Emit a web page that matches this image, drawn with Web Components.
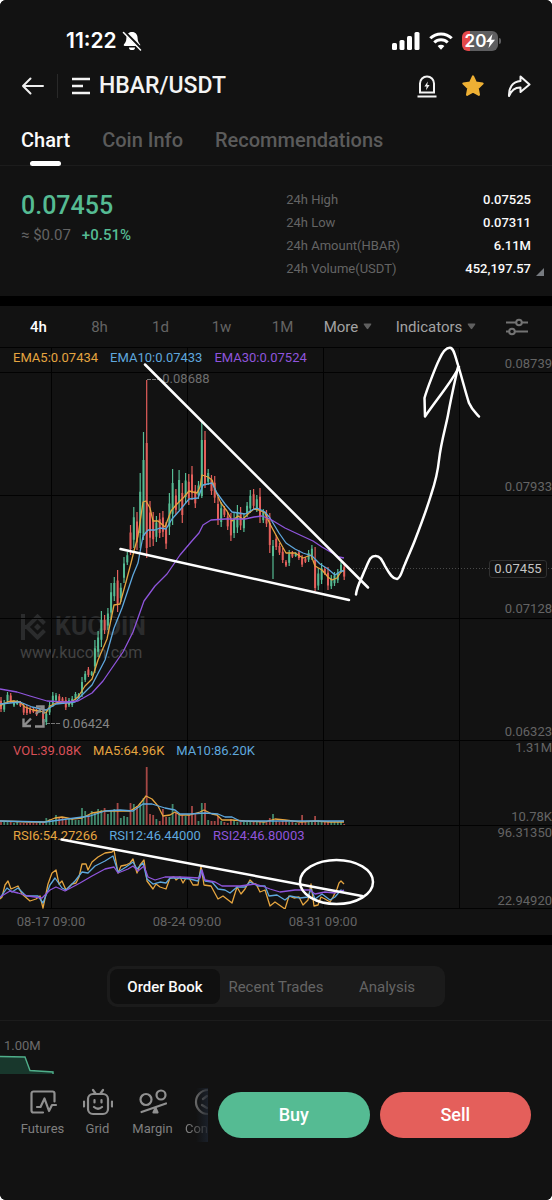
<!DOCTYPE html>
<html lang="en">
<head>
<meta charset="utf-8">
<meta name="viewport" content="width=device-width,initial-scale=1">
<title>HBAR/USDT</title>
<style>
body{ margin:0; background:#fff; }
</style>
</head>
<body>
<trade-page>
    <status-bar time="11:22" battery="20"></status-bar>
    <pair-header>HBAR/USDT</pair-header>
    <page-tabs></page-tabs>
    <price-stats></price-stats>
    <interval-bar slot="chart"></interval-bar>
    <candle-chart slot="chart">
        <hand-drawing></hand-drawing>
    </candle-chart>
    <segment-tabs slot="book"></segment-tabs>
    <depth-preview slot="book">1.00M</depth-preview>
    <trade-bar slot="book"></trade-bar>
</trade-page>

<script>
const RESET = `
    :host,*{ box-sizing:border-box; }
    button{ margin:0; padding:0; border:0; background:none; color:inherit; font:inherit; cursor:pointer; }
    a{ color:inherit; text-decoration:none; }
    svg{ display:block; }
`;

class BaseElement extends HTMLElement {
    constructor() {
        super();
        const shadowRoot = this.attachShadow({ mode: 'open' });
        shadowRoot.innerHTML = `<style>${RESET}${this.css()}</style>${this.html()}`;
    }
    css() { return '' }
    html() { return '' }
}

class TradePage extends BaseElement {
    css() {
        return `
        :host{
            --bg:#121212; --line:#1c1c1c; --muted:#646464; --soft:#8c8c8c;
            --green:#55bb93; --red:#e45f5b; --yellow:#e5a540; --blue:#5fa8de; --purple:#8f55dc;
            display:flex; flex-direction:column; min-height:100vh;
            background:#000; color:#f3f3f3; border-radius:6px; overflow:hidden;
            font:13px/16px Roboto,"Liberation Sans",sans-serif;
        }
        section,header,main{ background:var(--bg); }
        main{ margin:10px 0; }
        section{ flex:1; }
        `;
    }
    html() {
        return `
        <header><slot></slot></header>
        <main><slot name="chart"></slot></main>
        <section><slot name="book"></slot></section>
        `;
    }
}

class StatusBar extends BaseElement {
    css() {
        return `
        :host{ display:flex; align-items:center; justify-content:space-between; padding:28px 54px 0 66px; height:54px; font:600 21px/26px Inter,sans-serif; color:#fff; }
        div{ display:flex; align-items:center; }
        .left{ gap:5px; }
        .right{ gap:9px; }
        .battery{ position:relative; display:flex; align-items:center; justify-content:center; width:36px; height:20px; border-radius:6px; background:linear-gradient(to right,#e5484a 22%,#5e5e60 0%); font-size:17px; }
        .battery::after{ content:""; position:absolute; left:37px; top:7px; width:2px; height:6px; border-radius:0 2px 2px 0; background:#5e5e60; }
        `;
    }
    html() {
        return `
        <div class="left"><span>${this.getAttribute('time')}</span>
            <svg width="20" height="20" viewBox="0 0 20 20" aria-label="Silent"><path d="M10 1c-3.600 0-5.600 2.700-5.600 6 0 3.500-1.400 5-2.400 6.300-.6.900-.1 1.700.8 1.700h14.400c.9 0 1.400-.8.800-1.700-1-1.300-2.400-2.800-2.400-6.300 0-3.300-2-6-5.600-6z" fill="#fff"/><path d="M7 16.500h6a3 2.600 0 0 1-6 0z" fill="#fff"/><path d="M2.500 1L19.500 18" stroke="#121212" stroke-width="3"/><path d="M1.500 1.500L18.500 19" stroke="#fff" stroke-width="1.500" stroke-linecap="round"/></svg>
        </div>
        <div class="right">
            <svg width="28" height="18" viewBox="0 0 28 18" fill="#fff" aria-label="Signal"><rect y="11" width="5" height="7" rx="1.500"/><rect x="7.500" y="8" width="5" height="10" rx="1.500"/><rect x="15" y="4" width="5" height="14" rx="1.500"/><rect x="22.500" width="5" height="18" rx="1.500"/></svg>
            <svg width="24" height="18" viewBox="0 0 24 18" fill="none" stroke="#fff" stroke-width="3" aria-label="Wi-Fi"><path d="M1.300 6.300a15.200 15.200 0 0 1 21.400 0"/><path d="M5.300 10.500a9.500 9.500 0 0 1 13.400 0"/><path d="M12 17.700l-3.400-3.600a4.900 4.900 0 0 1 6.800 0z" fill="#fff" stroke="none"/></svg>
            <div class="battery">${this.getAttribute('battery')}<svg width="9" height="14" viewBox="0 0 9 14"><path d="M6.500 0L0 8h3.800L2.500 14 9 5.700H5.200z" fill="#fff"/></svg></div>
        </div>
        `;
    }
}

class PairHeader extends BaseElement {
    css() {
        return `
        :host{ display:flex; align-items:center; height:64px; padding:0 21px; }
        .back{ padding-right:13px; border-right:1px solid #292929; }
        .pair{ display:flex; align-items:center; gap:8px; margin-left:14px; }
        h1{ margin:0; font-size:23px; line-height:28px; font-weight:500; }
        .tools{ display:flex; gap:22px; margin-left:auto; }
        `;
    }
    html() {
        return `
        <button class="back" aria-label="Back"><svg width="23" height="24" viewBox="0 0 23 24" fill="none" stroke="#eee" stroke-width="2" stroke-linecap="round" stroke-linejoin="round"><path d="M22 12H2M9.500 4.500L2 12l7.500 7.500"/></svg></button>
        <button class="pair">
            <svg width="19" height="18" viewBox="0 0 19 18" stroke="#f3f3f3" stroke-width="2.400"><path d="M0 2h18M0 9h11M0 16h18"/></svg>
            <h1><slot></slot></h1>
        </button>
        <div class="tools">
            <button aria-label="Price alert"><svg width="24" height="24" viewBox="0 0 24 24" fill="none" stroke="#f3f3f3" stroke-width="2"><path d="M5 18.500V9.500a7 7 0 0 1 14 0v9zM2.500 22.500h19"/><path d="M12.800 7.500l-3.400 5h2.200l-.6 3.800 3.600-5.200h-2.300z" fill="#f3f3f3" stroke="none"/></svg></button>
            <button aria-label="Favourite"><svg width="24" height="24" viewBox="0 0 24 24"><path d="M12 2.500l2.900 6.100 6.700.9-4.900 4.600 1.200 6.700-5.900-3.200-5.900 3.200 1.200-6.700-4.900-4.600 6.700-.9z" fill="#eeb034" stroke="#eeb034" stroke-width="2.200" stroke-linejoin="round"/></svg></button>
            <button aria-label="Share"><svg width="24" height="24" viewBox="0 0 24 24" fill="none" stroke="#f3f3f3" stroke-width="2" stroke-linejoin="round"><path d="M13.500 2.500L22.500 10.500 13.500 18v-4.600C8 13.200 4.500 16 2 22c-.4-8 3.500-14.500 11.500-15z"/></svg></button>
        </div>
        `;
    }
}

class PageTabs extends BaseElement {
    css() {
        return `
        :host{ display:block; border-bottom:1px solid var(--line); }
        nav{ display:flex; gap:32px; padding:0 21px; }
        a{ position:relative; padding:10px 0 13px; font-size:20px; line-height:24px; font-weight:500; color:#5b5b5b; }
        a[aria-current]{ color:#fafafa; }
        a[aria-current]::after{ content:""; position:absolute; left:50%; bottom:-1px; width:31px; height:5px; margin-left:-16px; border-radius:3px; background:#fff; }
        `;
    }
    html() {
        return `<nav><a href="#chart" aria-current="page">Chart</a><a href="#info">Coin Info</a><a href="#recommendations">Recommendations</a></nav>`;
    }
}

class PriceStats extends BaseElement {
    css() {
        return `
        :host{ position:relative; display:grid; grid-template-columns:13fr 12fr; padding:22px 21px 16px; }
        .price{ color:var(--green); font-size:25px; line-height:36px; font-weight:500; }
        .sub{ display:flex; gap:11px; font-size:15px; line-height:22px; color:var(--muted); }
        .sub b{ color:var(--green); font-weight:500; }
        dl{ margin:0; line-height:23px; }
        dl div{ display:flex; justify-content:space-between; }
        dt{ color:var(--muted); }
        dd{ margin:0; color:#fafafa; font-weight:500; }
        .more{ position:absolute; right:8px; bottom:20px; }
        `;
    }
    html() {
        return `
        <div><div class="price">0.07455</div><div class="sub"><span>≈ $0.07</span><b>+0.51%</b></div></div>
        <dl>
            <div><dt>24h High</dt><dd>0.07525</dd></div>
            <div><dt>24h Low</dt><dd>0.07311</dd></div>
            <div><dt>24h Amount(HBAR)</dt><dd>6.11M</dd></div>
            <div><dt>24h Volume(USDT)</dt><dd>452,197.57</dd></div>
        </dl>
        <svg class="more" width="8" height="8" viewBox="0 0 8 8"><path d="M8 0v8H0z" fill="#777b80"/></svg>
        `;
    }
}

class IntervalBar extends BaseElement {
    css() {
        return `
        :host{ display:grid; grid-template-columns:repeat(5,61fr) 70fr 106fr 55fr; height:41px; padding:0 8px; font-size:15px; color:var(--muted); }
        button{ display:flex; align-items:center; justify-content:center; gap:5px; }
        .on{ color:#fff; font-weight:500; }
        .menu{ color:#a3a3a3; }
        `;
    }
    html() {
        const caret = '<svg width="9" height="7" viewBox="0 0 9 7"><path d="M1.500.500h6q1.500 0 .6 1.200L5.200 5.800q-.7.800-1.400 0L.9 1.700Q0 .500 1.500.500z" fill="#5f5f5f"/></svg>';
        return `
        <button class="on">4h</button><button>8h</button><button>1d</button><button>1w</button><button>1M</button>
        <button class="menu" aria-haspopup="menu">More ${caret}</button>
        <button class="menu" aria-haspopup="menu">Indicators ${caret}</button>
        <button aria-label="Chart settings"><svg width="22" height="18" viewBox="0 0 22 18" fill="none" stroke="#737373" stroke-width="2"><path d="M0 4.500h10M16 4.500h6M0 13.500h3M9 13.500h13"/><circle cx="13" cy="4.500" r="2.800"/><circle cx="6" cy="13.500" r="2.800"/></svg></button>
        `;
    }
}

// [high, low, up, body top, body bottom] in plot units; the body is optional
const CANDLES = [
    [697,712,0],[700,712,1],[692,703,1],[693,703,0],[700,707,1],[700,705,1],[701,707,0],[703,715,0],[705,715,0],[707,714,0],
    [708,713,0],[709,716,0],[708,713,1],[706,727,0],[710,725,1],[702,715,1],[692,707,1],[693,702,1],[694,703,0],[697,703,0],
    [697,710,0],[698,707,1],[696,707,1],[692,700,1],[693,699,1],[677,697,1],[671,682,1],[667,677,0],[671,676,1],[640,673,1],
    [631,657,1],[611,647,1],[615,634,0],[608,630,1],[583,620,1],[577,601,1],[570,612,0],[583,602,1],[557,583,1],[552,565,1],
    [525,555,0],[507,548,1],[512,550,0],[473,548,1],[432,540,1,460,536],[380,558,0,443,548],[501,547,0],[512,546,0],[516,542,1],[513,538,0],
    [511,537,0],[522,549,0],[493,535,1],[469,525,1],[489,515,0],[470,510,1],[483,523,0],[473,503,1],[474,505,0],[466,500,0],
    [485,508,0],[481,499,1],[422,498,1,440,496],[431,488,0,440,484],[469,485,1],[475,495,0],[476,503,0],[497,525,0],[502,527,1],[506,517,0],
    [512,530,0],[513,541,0],[513,538,1],[505,533,1],[507,530,0],[513,532,1],[502,517,1],[490,513,1],[489,510,0],[495,512,1],
    [488,523,0],[509,523,1],[510,527,0],[513,553,0],[540,579,1,546,556],[535,550,0],[543,555,0],[548,563,0],[560,567,0],[550,566,1],
    [551,558,0],[552,557,1],[550,560,0],[555,567,0],[557,563,0],[550,562,1],[545,560,1],[547,591,0,560,588],[568,590,1],[563,584,1],
    [567,575,0],[567,590,0],[575,589,1],[572,586,1],[569,583,1],[562,573,1],[563,580,0]
];

const VOLUMES = [
    3,3,4,3,2,3,2,2,2,2,2,2,3,3,7,6,5,10,8,7,5,6,7,5,5,17,14,10,14,12,16,15,17,11,15,16,22,7,9,8,
    22,21,19,22,27,58,11,10,6,4,16,8,8,21,12,11,10,9,10,19,12,4,22,22,5,4,4,9,4,3,2,6,5,3,3,3,3,4,3,3,
    4,3,3,7,11,4,3,4,5,3,3,2,2,10,3,3,4,9,5,3,4,4,3,3,3,3,1
];

const LINES = [
    ['yellow','0,706 7,702 13,701 20,702 25,707 33,710 40,711 46,713 50,706 56,703 63,702 70,703 78,697 85,686 92,679 98,660 107,639 114,605 120,604 126,582 131,563 134,551 138,536 143,502 146,501 150,508 153,521 158,521 165,527 171,511 176,505 180,501 184,497 189,491 197,493 200,487 202,475 208,477 212,480 216,492 221,503 227,511 232,521 238,516 243,519 249,513 254,509 259,510 265,513 270,524 277,537 286,553 295,553 303,558 311,555 315,566 322,570 328,577 332,580 337,578 341,572 344,570'],
    ['blue','0,704 20,702 32,707 46,710 56,704 75,702 92,685 105,660 114,628 122,608 133,575 138,563 143,536 148,530 155,530 160,528 166,529 172,519 180,510 189,499 198,498 203,485 212,483 217,493 225,504 232,512 245,514 252,510 257,508 265,512 270,518 279,533 286,543 295,549 303,553 312,556 320,564 328,569 335,575 341,571 344,571'],
    ['purple','0,689 17,692 30,696 47,701 65,702 78,701 92,693 103,681 114,665 123,652 133,632 144,601 155,586 167,574 180,555 191,542 199,533 203,525 211,520 225,519 245,519 254,517 262,516 270,519 285,528 300,535 313,541 322,547 334,554 339,557 344,558'],
    ['yellow','0,821 30,822 45,822 55,818 62,817 72,819 82,818 92,813 105,811 120,811 130,811 138,806 143,800 146,796 152,799 158,806 163,816 170,815 175,812 180,815 190,815 200,812 204,810 212,814 217,815 222,820 232,820 245,821 265,822 275,819 285,820 300,822 315,821 330,822 344,822'],
    ['blue','0,821 45,822 60,820 75,818 90,816 105,811 120,810 133,811 143,804 152,804 165,808 175,810 180,814 190,814 205,813 218,814 225,817 232,817 240,821 344,821'],
    ['yellow','0,899 2,897 5,885 8,881 11,889 18,886 22,894 30,901 36,899 40,896 43,908 48,884 52,873 56,870 59,884 62,881 66,890 72,884 76,883 79,877 82,864 86,864 88,870 92,862 98,857 105,853 112,852 114,850 118,873 121,866 126,865 130,863 133,859 137,873 140,865 144,860 147,881 150,885 153,889 156,884 160,887 166,889 170,878 174,877 176,880 180,877 183,883 186,878 189,878 193,885 198,885 201,866 204,885 211,886 218,899 223,896 232,903 237,887 241,894 245,889 250,880 254,884 256,884 260,892 265,890 270,906 275,902 285,909 289,896 294,898 299,897 303,905 308,900 311,884 314,906 318,905 321,897 325,899 330,902 333,897 337,889 339,883 341,881 344,884'],
    ['blue','0,898 7,888 12,892 18,888 26,896 38,896 43,903 50,885 55,878 62,888 66,890 75,881 82,872 88,873 95,866 105,861 113,856 118,872 126,867 133,862 137,869 143,863 147,879 153,884 160,882 166,883 170,878 180,878 190,879 198,881 201,870 205,881 212,882 218,889 225,890 230,893 237,887 245,887 250,882 258,886 265,886 269,896 277,895 285,900 290,896 300,898 308,897 311,889 315,899 322,894 330,900 335,897 341,890 344,891'],
    ['purple','0,897 10,891 18,893 28,896 42,898 50,890 56,887 65,891 80,883 92,876 105,869 114,867 118,873 128,869 133,866 138,871 144,866 148,877 155,880 165,877 180,877 200,878 202,870 205,880 215,882 222,886 240,886 255,884 262,886 270,889 280,892 295,890 310,890 315,894 325,892 335,893 344,890']
];

class CandleChart extends BaseElement {
    css() {
        return `
        :host{ display:block; color:var(--muted); }
        .plot{ position:relative; display:grid; grid-template-rows:393px 85px 84px; }
        .graph,::slotted(hand-drawing){ position:absolute; inset:0; width:100%; height:100%; pointer-events:none; }
        .graph polyline{ fill:none; stroke-width:1.300; stroke-linejoin:round; }
        .pane{ position:relative; display:flex; justify-content:space-between; }
        .legend{ display:flex; gap:12px; padding:2px 0 0 13px; line-height:18px; }
        .axis{ display:flex; flex-direction:column; justify-content:space-between; text-align:right; }
        .price .axis{ display:grid; grid-template-rows:25px repeat(3,1fr); align-items:end; }
        .yellow{ color:var(--yellow); } .blue{ color:var(--blue); } .purple{ color:var(--purple); } .red{ color:#d85058; }
        .mark{ position:absolute; left:29.4%; top:24px; color:#6e6e6e; }
        .mark.low{ left:11.3%; top:369px; color:#858585; }
        .now{ position:absolute; right:5px; top:213px; width:58px; border:1px solid #303030; border-radius:3px; background:var(--bg); color:#c4c4c4; text-align:center; }
        .watermark{ position:absolute; left:20px; top:266px; color:#2b2c2d; }
        .brand{ display:flex; align-items:center; gap:7px; font-size:25px; line-height:28px; font-weight:700; }
        .watermark small{ display:block; font-size:16px; line-height:24px; color:#424242; }
        .expand{ position:absolute; left:22px; top:358px; }
        .dates{ display:grid; grid-template-columns:repeat(3,136fr) 161fr; margin-left:-17px; line-height:26px; text-align:center; }
        `;
    }
    html() {
        const step = 136 / 42;
        const bars = CANDLES.map(([high,low,up,top,bottom],i) => {
            const x = (1 + step * i).toFixed(1);
            const size = low - high;
            const t = top || high + size * .25;
            const b = bottom || low - size * .2;
            const color = `var(--${up ? 'green' : 'red'})`;
            return `<g stroke="${color}"><path d="M${x} ${high}V${low}" stroke-width="1.200"/><path d="M${x} ${t}V${b}" stroke-width="2"/><path d="M${x} ${825 - VOLUMES[i]}V825" stroke-width="1.800" opacity=".7"/></g>`;
        }).join('');
        const lines = LINES.map(([color,points]) => `<polyline points="${points}" stroke="var(--${color})"/>`).join('');
        return `
        <div class="plot">
            <div class="watermark">
                <div class="brand"><svg width="28" height="28" viewBox="0 0 28 28" fill="none" stroke="currentColor" stroke-width="4"><path d="M3 1v26M4 14h3L17.500 3.500l7 7M7 14l10.500 10.500 7-7"/><path d="M17.500 10.500L21 14l-3.500 3.500L14 14z" fill="currentColor" stroke="none"/></svg>KUCOIN</div>
                <small>www.kucoin.com</small>
            </div>
            <svg class="graph" viewBox="0 347 552 562" preserveAspectRatio="none">
                <path d="M0 347.500H552M0 372.500H552M0 495.500H552M0 618.500H552M0 740.500H552M0 825.500H552M0 908.500H552M51.500 347V909M187.500 347V909M323.500 347V909M459.500 347V909" stroke="#020202"/>
                <path d="M344 568.500H552" stroke="#4a4a4a" stroke-dasharray="1 2"/>
                <path d="M147 379.500H162M46 723.500H60" stroke="#777" stroke-dasharray="4 1"/>
                ${bars}${lines}
            </svg>
            <div class="pane price">
                <div class="legend"><span class="yellow">EMA5:0.07434</span><span class="blue">EMA10:0.07433</span><span class="purple">EMA30:0.07524</span></div>
                <div class="axis"><span>0.08739</span><span>0.07933</span><span>0.07128</span><span>0.06323</span></div>
                <span class="mark">0.08688</span>
                <span class="mark low">0.06424</span>
                <span class="now">0.07455</span>
                <button class="expand" aria-label="Full screen"><svg width="23" height="23" viewBox="0 0 23 23" fill="none" stroke="#8d8d8d" stroke-width="2.400"><path d="M14 1.500h7.500V9M21 2l-7 7M13 21.500h8.500V14M1.500 13.500v7.500H9M2 20.500l7-7"/></svg></button>
            </div>
            <div class="pane">
                <div class="legend"><span class="red">VOL:39.08K</span><span class="yellow">MA5:64.96K</span><span class="blue">MA10:86.20K</span></div>
                <div class="axis"><span>1.31M</span><span>10.78K</span></div>
            </div>
            <div class="pane">
                <div class="legend"><span class="yellow">RSI6:54.27266</span><span class="blue">RSI12:46.44000</span><span class="purple">RSI24:46.80003</span></div>
                <div class="axis"><span>96.31350</span><span>22.94920</span></div>
            </div>
            <slot></slot>
        </div>
        <div class="dates"><span>08-17 09:00</span><span>08-24 09:00</span><span>08-31 09:00</span></div>
        `;
    }
}

class HandDrawing extends BaseElement {
    css() {
        return `
        :host{ display:block; }
        svg{ width:100%; height:100%; overflow:visible; fill:none; stroke:#fff; stroke-width:2.500; stroke-linecap:round; stroke-linejoin:round; }
        `;
    }
    html() {
        return `
        <svg viewBox="0 347 552 562" preserveAspectRatio="none">
            <path d="M145 364.500L368 587.500M120.500 549L349 600M61.500 839.500L362 896"/>
            <path d="M356 594.500C357 586 361 580 364 572C369 561 370 556 375 556C380 555.500 382 560 385 566C390 575 393 579 397 579C401 578 402 570 405 564C409 554 412 548 415 540C422 522 427 508 431 495C435 483 438 470 439 460C441 442 446 426 448 415C451 398 454 385 458 367"/>
            <path d="M459 367C453 380 437 399 425 416.500L424.500 398C427 389 436 366 439 360C442 353 446 347.500 450 347.700C454 348 455 356 458 365C462 378 466 394 469 403C472 410 476 413 479 416.500"/>
            <ellipse cx="336.500" cy="882" rx="36.500" ry="22"/>
        </svg>
        `;
    }
}

class SegmentTabs extends BaseElement {
    css() {
        return `
        :host{ display:flex; justify-content:center; padding:21px 0 13px; border-bottom:1px solid var(--line); }
        div{ display:flex; gap:1px; padding:3px; border-radius:10px; background:#1b1b1b; }
        button{ width:110px; height:35px; border-radius:8px; color:var(--muted); font-size:15px; }
        .on{ background:#101010; color:#fafafa; font-weight:500; }
        `;
    }
    html() {
        return `<div><button class="on">Order Book</button><button>Recent Trades</button><button>Analysis</button></div>`;
    }
}

class DepthPreview extends BaseElement {
    css() {
        return `
        :host{ display:block; padding-top:17px; color:#6b6b6b; }
        span{ padding-left:4px; }
        `;
    }
    html() {
        return `
        <span><slot></slot></span>
        <svg width="54" height="20" viewBox="0 0 54 20"><path d="M0 2.500L25 3l5 13.500L53 18l1 2H0z" fill="#18372c"/><path d="M0 2.500L25 3l5 13.500L53 18v2" fill="none" stroke="#4fae8a" stroke-width="1.400"/></svg>
        `;
    }
}

class TradeBar extends BaseElement {
    css() {
        return `
        :host{ display:flex; align-items:center; gap:10px; height:82px; padding-right:21px; }
        nav{ display:flex; flex:0 0 208px; height:54px; padding-left:15px; overflow:hidden; color:#7f7f7f; background:linear-gradient(to left,#1a2029,transparent 12px); }
        a{ display:flex; flex:0 0 55px; flex-direction:column; align-items:center; gap:5px; }
        a:last-child{ -webkit-mask:linear-gradient(to right,#000 8px,transparent 32px); mask:linear-gradient(to right,#000 8px,transparent 32px); }
        svg{ width:30px; height:28px; fill:none; stroke:#909090; stroke-width:2.200; stroke-linecap:round; stroke-linejoin:round; }
        button{ flex:1; height:46px; border-radius:23px; background:var(--green); color:#fff; font-size:18px; font-weight:500; }
        .sell{ background:var(--red); }
        `;
    }
    html() {
        return `
        <nav>
            <a href="#futures"><svg viewBox="0 0 30 28"><path d="M15 24.500H5.500a2 2 0 0 1-2-2v-17a2 2 0 0 1 2-2h19a2 2 0 0 1 2 2v8M9 19h3.500l4-8.500 4.500 12.500 3-6h4"/></svg>Futures</a>
            <a href="#grid"><svg viewBox="0 0 30 28"><rect x="5" y="6" width="20" height="20" rx="5"/><path d="M10 2l2.500 3.500M20 2l-2.500 3.500M1 13.500v5M29 13.500v5M11.500 12v2.500M18.500 12v2.500M11 19q4 3.500 8 0"/></svg>Grid</a>
            <a href="#margin"><svg viewBox="0 0 30 28"><circle cx="8" cy="11.500" r="5.500"/><circle cx="23" cy="7" r="4.500"/><path d="M3.500 24L28 15.500"/><path d="M17.500 20l2 4.500h-4z" fill="#909090"/></svg>Margin</a>
            <a href="#convert"><svg viewBox="0 0 30 28"><circle cx="15" cy="14" r="12"/><path d="M10 11l4-3M9 17l5 3M19 9l3 4"/></svg>Convert</a>
        </nav>
        <button>Buy</button>
        <button class="sell">Sell</button>
        `;
    }
}

customElements.define('trade-page', TradePage);
customElements.define('status-bar', StatusBar);
customElements.define('pair-header', PairHeader);
customElements.define('page-tabs', PageTabs);
customElements.define('price-stats', PriceStats);
customElements.define('interval-bar', IntervalBar);
customElements.define('candle-chart', CandleChart);
customElements.define('hand-drawing', HandDrawing);
customElements.define('segment-tabs', SegmentTabs);
customElements.define('depth-preview', DepthPreview);
customElements.define('trade-bar', TradeBar);
</script>
</body>
</html>
